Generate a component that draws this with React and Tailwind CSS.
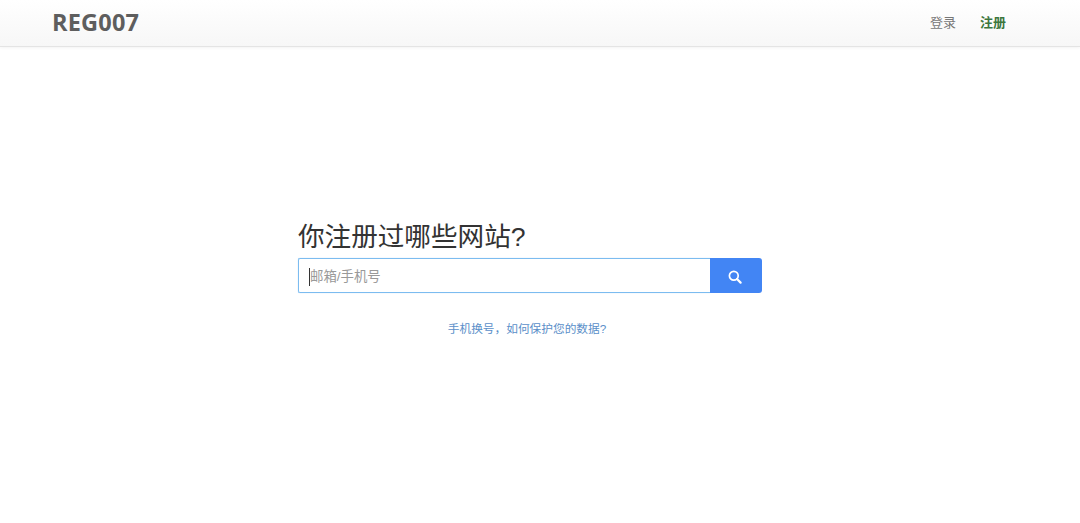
import React from 'react';

const CJK = 'font-["Liberation_Sans","Noto_Sans_CJK_SC",sans-serif]';

export default function App() {
  return (
    <div className={`min-h-[523px] bg-white ${CJK}`}>
      <header className="h-[47px] flex items-center justify-between pl-[52px] pr-[74px] border-b border-[#e4e4e4] bg-gradient-to-b from-white to-[#f7f7f7] shadow-[0_1px_3px_rgba(0,0,0,0.05)]">
        <a className='font-["Open_Sans",sans-serif] font-bold text-[23.5px] leading-none text-[#5e5e5e] tracking-[0.2px]'>REG007</a>
        <nav className="flex items-center gap-[24px] text-[13px]">
          <a className="text-[#777777]">登录</a>
          <a className="text-[#3c763d] font-bold">注册</a>
        </nav>
      </header>

      <main className="w-[464px] ml-[298px] pt-[172px]">
        <h1 className="text-[26.6px] leading-[36px] text-[#333333] mb-[3px]">你注册过哪些网站?</h1>
        <div className="flex h-[35px]">
          <div className="flex-1 flex items-center pl-[10px] pt-[3px] border border-[#7cbcf0] border-r-0 rounded-l-[2px] shadow-[0_0_1px_rgba(102,175,233,0.6)]">
            <span className="w-px h-[18px] bg-[#333333]"></span>
            <span className="text-[13.4px] text-[#999999]">邮箱/手机号</span>
          </div>
          <button className="w-[52px] pr-[2px] pt-[2px] flex items-center justify-center bg-[#4285f4] rounded-r-[3px]">
            <svg width="14" height="14" viewBox="0 0 14 14" fill="none" stroke="white" strokeWidth="1.7">
              <circle cx="5.8" cy="5.8" r="4.4" />
              <path d="M9 9 L12.6 12.6" strokeWidth="2.2" strokeLinecap="round" />
            </svg>
          </button>
        </div>
        <p className="mt-[27px] pr-[6px] text-center text-[11.7px] leading-[18px] text-[#5b8fc9]">手机换号，如何保护您的数据?</p>
      </main>
    </div>
  );
}
